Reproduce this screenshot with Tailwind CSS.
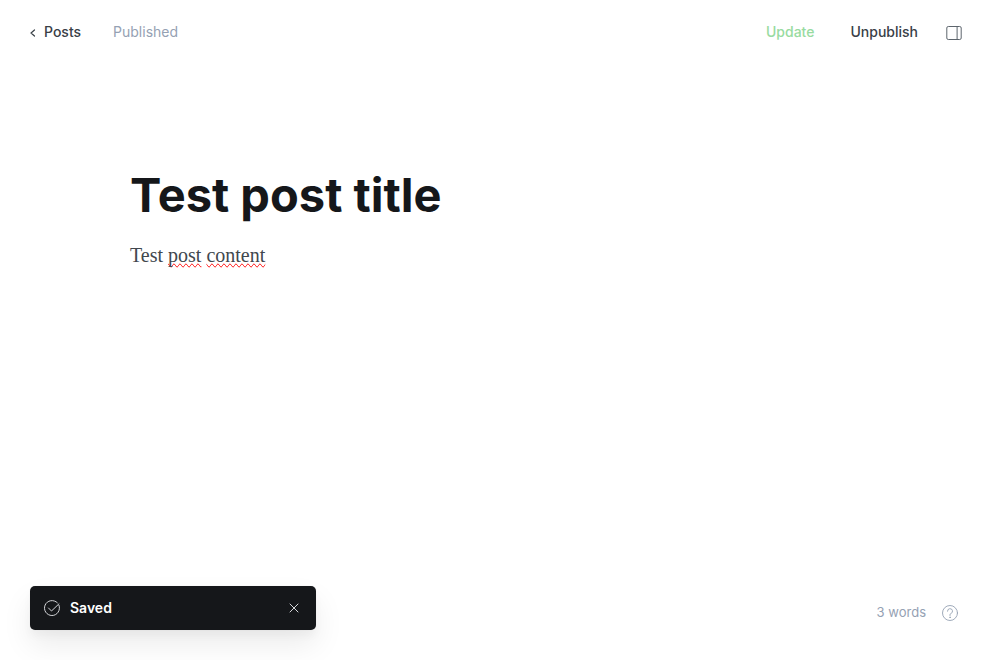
<!DOCTYPE html>
<html lang="en">
<head>
<meta charset="utf-8">
<meta name="viewport" content="width=device-width, initial-scale=1">
<title>Test post title</title>
<script src="https://cdn.jsdelivr.net/npm/@tailwindcss/browser@4"></script>
</head>
<body class="flex min-h-screen flex-col bg-white font-['Inter',sans-serif] text-sm text-[#394047]">
  <header class="flex h-16 shrink-0 items-center justify-between pr-[38px] pl-[30px]">
    <div class="flex items-center gap-8">
      <a href="#" class="flex items-center gap-2 font-medium">
        <svg class="mt-[2px] h-2 w-[6px]" viewBox="0 0 6 8" fill="none" stroke="currentColor" stroke-width="1.2" stroke-linecap="round" stroke-linejoin="round" aria-hidden="true"><path d="M4.500 1 1 4l3.500 3"/></svg>
        Posts
      </a>
      <span class="text-[#95a1b3]">Published</span>
    </div>
    <div class="flex items-center">
      <button type="button" class="mr-9 font-medium text-[#98dba0]">Update</button>
      <button type="button" class="mr-7 font-medium">Unpublish</button>
      <button type="button" aria-label="Settings" class="mt-[2px]">
        <svg class="size-4" viewBox="0 0 16 16" fill="none" stroke="#5d656d" stroke-width="1" aria-hidden="true"><rect x="0.800" y="1.500" width="14.400" height="13" rx="1.500"/><path d="M11.100 1.500v13"/></svg>
      </button>
    </div>
  </header>

  <main class="mx-auto w-full max-w-[740px] grow pt-[104px]">
    <textarea rows="1" aria-label="Post title" spellcheck="false" class="block w-full resize-none overflow-hidden text-[47px] leading-[54px] font-bold text-[#15171a] outline-none">Test post title</textarea>
    <div contenteditable="true" role="textbox" aria-label="Post content" spellcheck="false" class="mt-[17px] font-['Liberation_Serif',serif] text-xl leading-8 text-[#41474e] outline-none"><p>Test <span class="decoration-red-500 [text-decoration-line:spelling-error]">post</span> <span class="decoration-red-500 [text-decoration-line:spelling-error]">content</span></p></div>
  </main>

  <footer class="flex items-end justify-between pr-[42px] pb-[30px] pl-[30px]">
    <div role="status" class="flex h-11 w-[286px] items-center rounded-[5px] bg-[#15171a] pr-[17px] pl-[14px] text-white shadow-[0_0_1px_rgba(0,0,0,0.12),0_6px_9px_rgba(0,0,0,0.03),0_15px_30px_rgba(0,0,0,0.08)]">
      <svg class="size-4" viewBox="0 0 16 16" fill="none" stroke="#d5d7da" stroke-width="1" stroke-linecap="round" stroke-linejoin="round" aria-hidden="true"><path d="M15 5.300A7.500 7.500 0 1 1 13.300 2.700"/><path d="m4.500 8 3 3L15 3.800"/></svg>
      <span class="ml-[10px] grow font-semibold">Saved</span>
      <button type="button" aria-label="Close">
        <svg class="size-[10px]" viewBox="0 0 10 10" fill="none" stroke="#d5d7da" stroke-width="1" stroke-linecap="round" aria-hidden="true"><path d="m1 1 8 8M9 1 1 9"/></svg>
      </button>
    </div>
    <div class="mb-2 flex items-center gap-4 text-[13px] text-[#95a1b3]">
      <span>3 words</span>
      <a href="#" aria-label="Help">
        <svg class="size-4" viewBox="0 0 16 16" fill="none" stroke="currentColor" stroke-width="0.900" stroke-linecap="round" stroke-linejoin="round" aria-hidden="true"><circle cx="8" cy="8" r="7.500"/><path d="M5.500 6.200A2.500 2.500 0 1 1 8.900 8.500Q8 8.800 8 9.700v.8"/><circle cx="8" cy="12.300" r=".35"/></svg>
      </a>
    </div>
  </footer>
</body>
</html>
